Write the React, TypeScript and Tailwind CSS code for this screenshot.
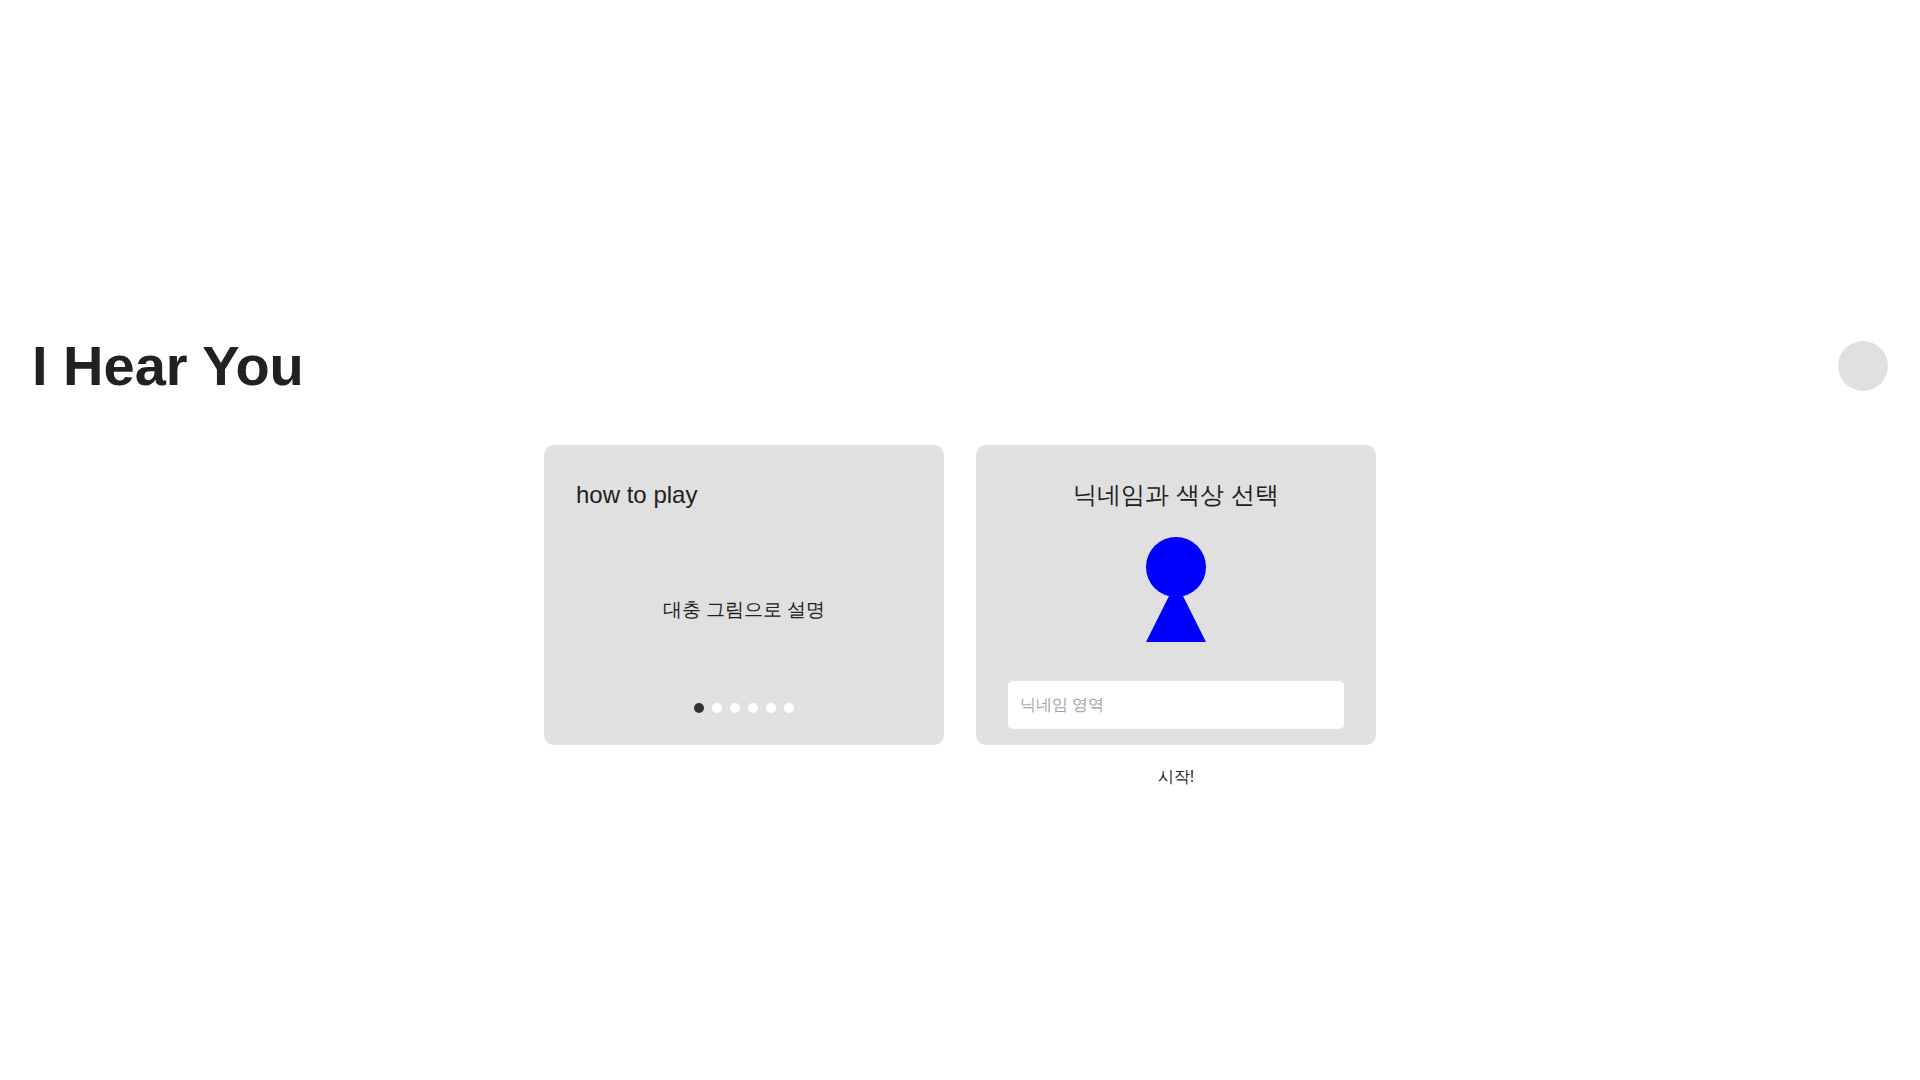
const dots = [0, 1, 2, 3, 4, 5];

function Header() {
  return (
    <header className="flex items-center justify-between px-8 pt-11 pb-12">
      <h1 className="text-[56px] leading-[62px] font-bold">I Hear You</h1>
      <button type="button" aria-label="Menu" className="size-[50px] rounded-full bg-[#e0e0e0]" />
    </header>
  );
}

function HowToPlay() {
  return (
    <section className="flex h-[300px] w-[400px] flex-col justify-between rounded-[10px] bg-[#e0e0e0] p-8">
      <h2 className="mb-1 text-2xl leading-9">how to play</h2>
      <p className="text-center text-[19px] leading-7">대충 그림으로 설명</p>
      <div className="flex justify-center gap-2">
        {dots.map((dot) => (
          <span key={dot} className={dot === 0 ? "size-2.5 rounded-full bg-[#333333]" : "size-2.5 rounded-full bg-white"} />
        ))}
      </div>
    </section>
  );
}

function Profile() {
  return (
    <form className="flex w-[400px] flex-col items-center" onSubmit={(event) => event.preventDefault()}>
      <section className="flex h-[300px] w-full flex-col items-center rounded-[10px] bg-[#e0e0e0] px-8 pt-8">
        <h2 className="text-2xl leading-9">닉네임과 색상 선택</h2>
        <svg className="mt-6 h-[105px] w-[60px] shrink-0" viewBox="0 0 60 105" fill="#0000ff" aria-hidden="true">
          <path d="M30 45 60 105H0Z" />
          <circle cx="30" cy="30" r="30" />
        </svg>
        <input
          type="text"
          aria-label="닉네임"
          placeholder="닉네임 영역"
          className="mt-[39px] h-12 w-full shrink-0 rounded-[5px] bg-white px-3 text-base placeholder:text-[#9ca3af]"
        />
      </section>
      <button type="submit" className="mt-5 text-base leading-6">시작!</button>
    </form>
  );
}

export default function App() {
  return (
    <div className="flex min-h-screen flex-col justify-center bg-white font-['Liberation_Sans',sans-serif] text-[#212121]">
      <Header />
      <main className="flex items-start justify-center gap-8">
        <HowToPlay />
        <Profile />
      </main>
    </div>
  );
}
